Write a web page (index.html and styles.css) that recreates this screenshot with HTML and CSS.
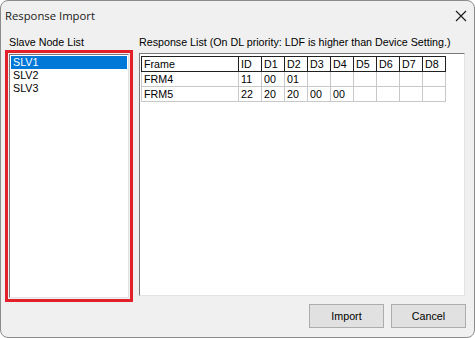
FILE: index.html
```html
<!DOCTYPE html>
<html lang="en">
<head>
<meta charset="UTF-8">
<meta name="viewport" content="width=device-width, initial-scale=1.0">
<link rel="stylesheet" href="styles.css">
</head>
<body>
  <div class="dialog">
    <div class="title-bar">
      <div class="title">Response Import</div>
      <svg class="close" width="12" height="12" viewBox="0 0 12 12">
        <path d="M1 1 L11 11 M11 1 L1 11" stroke="#1a1a1a" stroke-width="1.1" fill="none"/>
      </svg>
    </div>

    <div class="main">
      <div class="col-left">
        <div class="label label-left">Slave Node List</div>
        <div class="red-frame">
          <div class="listbox">
            <div class="item selected">SLV1</div>
            <div class="item">SLV2</div>
            <div class="item">SLV3</div>
          </div>
        </div>
      </div>

      <div class="col-right">
        <div class="label">Response List (On DL priority: LDF is higher than Device Setting.)</div>
        <div class="listview">
          <table class="grid">
            <tr class="head">
              <th class="c-frame">Frame</th>
              <th>ID</th><th>D1</th><th>D2</th><th>D3</th><th>D4</th><th>D5</th><th>D6</th><th>D7</th><th>D8</th>
            </tr>
            <tr>
              <td>FRM4</td>
              <td>11</td><td>00</td><td>01</td><td></td><td></td><td></td><td></td><td></td><td></td>
            </tr>
            <tr>
              <td>FRM5</td>
              <td>22</td><td>20</td><td>20</td><td>00</td><td>00</td><td></td><td></td><td></td><td></td>
            </tr>
          </table>
        </div>
      </div>
    </div>

    <div class="footer">
      <button class="button">Import</button>
      <button class="button">Cancel</button>
    </div>
  </div>
</body>
</html>
```

FILE: styles.css
```css
body {
  margin: 0;
  background: #ffffff;
  font-family: "Liberation Sans", Arial, sans-serif;
  font-size: 10.7px;
  color: #000;
}

.dialog {
  width: 475px;
  height: 338px;
  box-sizing: border-box;
  background: #f0f0f0;
  border: 1px solid #8c8c8c;
  border-radius: 8px;
  overflow: hidden;
}

.title-bar {
  height: 29px;
  display: flex;
  align-items: center;
  justify-content: space-between;
  padding: 0 7px 0 4px;
}

.title {
  font-family: "Open Sans", "Noto Sans", sans-serif;
  font-size: 11.3px;
  color: #1a1a1a;
}

.close {
  margin-top: 1px;
}

.main {
  display: flex;
  gap: 6px;
  padding: 0 8px 0 4px;
}

.label {
  height: 13px;
  line-height: 13px;
  margin-top: 6px;
  white-space: nowrap;
}

.label-left {
  padding-left: 4px;
}

.red-frame {
  width: 128px;
  height: 252px;
  box-sizing: border-box;
  margin-top: 1px;
  border: 3px solid #e0202a;
  padding: 1px;
}

.listbox {
  height: 100%;
  box-sizing: border-box;
  background: #fff;
  border: 1px solid;
  border-color: #7a7a7a #e3e3e3 #e3e3e3 #7a7a7a;
  padding: 1px;
}

.item {
  height: 13px;
  line-height: 13px;
  padding-left: 2px;
}

.item.selected {
  background: #0078d7;
  color: #fff;
}

.listview {
  width: 326px;
  height: 243px;
  box-sizing: border-box;
  margin-top: 4px;
  background: #fff;
  border: 1px solid;
  border-color: #7a7a7a #e3e3e3 #e3e3e3 #7a7a7a;
  padding: 2px 0 0 1px;
}

.grid {
  border-collapse: collapse;
  table-layout: fixed;
}

.grid th,
.grid td {
  width: 23px;
  height: 15px;
  box-sizing: border-box;
  padding: 0 0 0 2px;
  text-align: left;
  font-weight: normal;
  line-height: 14px;
  border: 1px solid #c8c8c8;
}

.grid th {
  border-color: #202020;
}

.grid .c-frame {
  width: 97px;
}

.footer {
  display: flex;
  justify-content: flex-end;
  gap: 7px;
  padding: 2px 8px 0 0;
}

.button {
  width: 75px;
  height: 24px;
  background: #e1e1e1;
  border: 1px solid #adadad;
  font-family: "Liberation Sans", Arial, sans-serif;
  font-size: 10.7px;
  color: #000;
  padding: 0;
}
```
